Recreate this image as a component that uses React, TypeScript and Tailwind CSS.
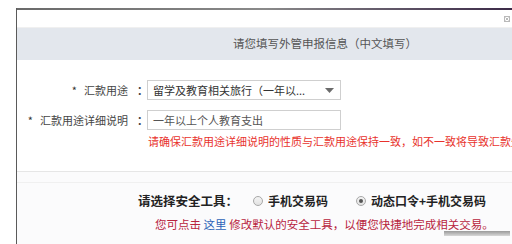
import React from "react";

const FONT = { fontFamily: '"Microsoft YaHei", "Noto Sans CJK SC", "Noto Sans", sans-serif' };

function Radio({ checked }: { checked?: boolean }) {
  return (
    <span className="grid h-[10px] w-[10px] shrink-0 place-items-center rounded-full border border-[#a8a8a8] bg-gradient-to-b from-[#f4f4f4] to-[#e2e2e2]">
      {checked && <span className="h-[4px] w-[4px] rounded-full bg-[#555]" />}
    </span>
  );
}

export default function App() {
  return (
    <div className="relative h-[244px] w-[512px] overflow-hidden bg-white" style={FONT}>
      <div className="ml-4 mt-2 flex h-[236px] flex-col border-l border-[#5a5a5a]">
        {/* top edge */}
        <div className="h-[2px] bg-gradient-to-r from-[#6a6a6a] via-[#8a8a8a] to-[#3c2a48]" />
        <div className="flex h-[18px] items-center justify-end border-b border-[#f0f0f0] pr-[2px]">
          <svg width="6" height="6" viewBox="0 0 6 6" className="text-[#b9b9b9]">
            <rect x="0.5" y="0.5" width="5" height="5" fill="none" stroke="currentColor" />
            <path d="M1.5 1.5 L4.5 4.5 M4.5 1.5 L1.5 4.5" stroke="currentColor" />
          </svg>
        </div>

        {/* header */}
        <div className="flex h-[32px] items-center bg-[#e3e7ed] pl-[216px] text-[11.5px] text-[#555]">
          请您填写外管申报信息（中文填写）
        </div>

        {/* form */}
        <div className="flex flex-col pt-[20px] text-[11px] text-[#444]">
          <div className="flex items-center">
            <div className="flex w-[130px] items-center justify-end">
              <span className="mr-[7px] text-[#333]">*</span>
              <span>汇款用途</span>
              <span className="ml-[9px] w-[10px] font-bold">：</span>
            </div>
            <div className="flex h-[20px] w-[194px] items-center justify-between border border-[#cfcfcf] bg-white pl-[5px] pr-[6px] text-[11px] text-[#333]">
              <span className="whitespace-nowrap">留学及教育相关旅行（一年以...</span>
              <svg width="9" height="5" viewBox="0 0 9 5">
                <path d="M0 0 H9 L4.5 5 Z" fill="#6b6b6b" />
              </svg>
            </div>
          </div>

          <div className="mt-[10px] flex items-center">
            <div className="flex w-[130px] items-center justify-end">
              <span className="mr-[7px] text-[#333]">*</span>
              <span>汇款用途详细说明</span>
              <span className="ml-[9px] w-[10px] font-bold">：</span>
            </div>
            <div className="flex h-[20px] w-[194px] items-center border border-[#cfcfcf] bg-white pl-[5px] text-[11px] text-[#555]">
              一年以上个人教育支出
            </div>
          </div>

          <div className="mt-[4px] whitespace-nowrap pl-[131px] text-[11px] leading-[14px] text-[#e8322c]">
            请确保汇款用途详细说明的性质与汇款用途保持一致，如不一致将导致汇款失败
          </div>
        </div>

        {/* security tool */}
        <div className="mt-[23px] flex flex-1 flex-col border-t border-[#e6e6e6] bg-[#fbfbfc]">
          <div className="mt-[10px] border-t border-[#f0f0f0]" />
          <div className="mt-[9px] flex items-center whitespace-nowrap pl-[121px] font-bold text-[#222]">
            <span className="text-[12.5px]">请选择安全工具：</span>
            <span className="ml-[15px] flex items-center gap-[5px] text-[12px]">
              <Radio />
              <span>手机交易码</span>
            </span>
            <span className="ml-[28px] flex items-center gap-[5px] text-[12px]">
              <Radio checked />
              <span>动态口令+手机交易码</span>
            </span>
          </div>
          <div className="mt-[5px] whitespace-nowrap pl-[138px] text-[11.5px] text-[#b8243e]">
            您可点击 <span className="text-[#2d63b8]">这里</span> 修改默认的安全工具，以便您快捷地完成相关交易。
          </div>
        </div>
      </div>

      {/* scroll artefact bottom right */}
      <div className="absolute bottom-[8px] right-[2px] h-[5px] w-[66px] bg-gradient-to-b from-[#9a9a9a] to-[#d8d8d8]" />
    </div>
  );
}
